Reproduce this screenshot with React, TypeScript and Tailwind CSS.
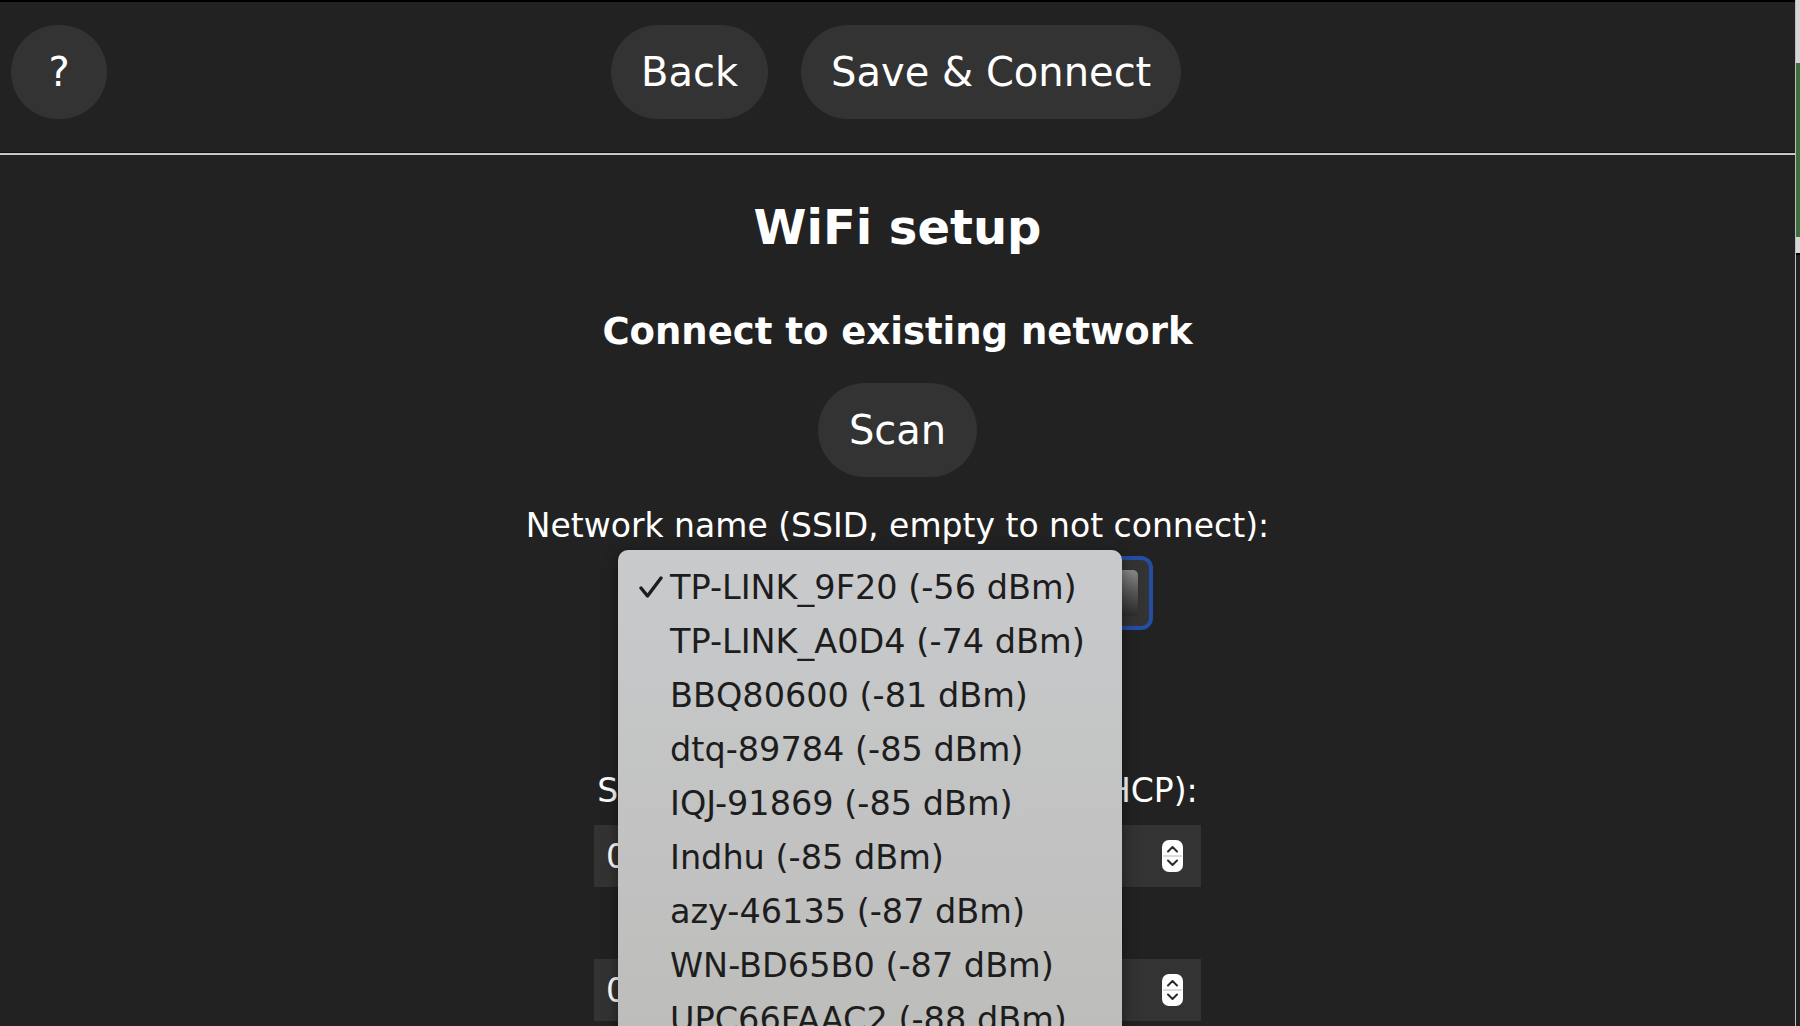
import React from "react";

const networks = [
  "TP-LINK_9F20 (-56 dBm)",
  "TP-LINK_A0D4 (-74 dBm)",
  "BBQ80600 (-81 dBm)",
  "dtq-89784 (-85 dBm)",
  "IQJ-91869 (-85 dBm)",
  "Indhu (-85 dBm)",
  "azy-46135 (-87 dBm)",
  "WN-BD65B0 (-87 dBm)",
  "UPC66FAAC2 (-88 dBm)",
];

const Spinner = () => (
  <svg width="21" height="32" viewBox="0 0 21 32">
    <rect x="0" y="0" width="21" height="32" rx="7" fill="#fff" />
    <line x1="1" y1="16" x2="20" y2="16" stroke="#cfcfcf" strokeWidth="1.5" />
    <path d="M6 11.5 L10.5 7 L15 11.5" fill="none" stroke="#2a2a2a" strokeWidth="2" strokeLinecap="round" strokeLinejoin="round" />
    <path d="M6 20.5 L10.5 25 L15 20.5" fill="none" stroke="#2a2a2a" strokeWidth="2" strokeLinecap="round" strokeLinejoin="round" />
  </svg>
);

const NumInput = () => (
  <div className="flex-1 h-[62px] bg-[#333] flex items-center justify-between pl-3 pr-[18px] text-[33px] leading-[37px]">
    <span>0</span>
    <Spinner />
  </div>
);

const IpRow = () => (
  <div className="w-[607px] flex items-center">
    <NumInput />
    <span className="w-[16px] text-center text-[33px]">.</span>
    <NumInput />
    <span className="w-[16px] text-center text-[33px]">.</span>
    <NumInput />
    <span className="w-[16px] text-center text-[33px]">.</span>
    <NumInput />
  </div>
);

const App = () => {
  return (
    <div className="relative w-[1800px] h-[1026px] overflow-hidden bg-[#222] flex font-['DejaVu_Sans',sans-serif] text-white">
      <main className="w-[1795px] flex flex-col">
        {/* top bar */}
        <div className="h-[152px] border-t-2 border-black flex items-start pt-[23px]">
          <button className="ml-[11px] w-[96px] h-[94px] rounded-full bg-[#333] text-[40px] leading-[46px]">?</button>
          <button className="ml-[504px] px-[30px] py-6 rounded-full bg-[#333] text-[40px] leading-[46px]">Back</button>
          <button className="ml-[33px] px-[30px] py-6 rounded-full bg-[#333] text-[40px] leading-[46px]">Save &amp; Connect</button>
        </div>
        <div className="h-px bg-[#111]" />
        <div className="h-[2px] bg-[#c8c8c8]" />

        <div className="flex flex-col items-center">
          <h2 className="mt-[44px] text-[48px] leading-[56px] font-bold">WiFi setup</h2>
          <h3 className="mt-[55px] text-[37px] leading-[44px] font-bold">Connect to existing network</h3>
          <button className="mt-[29px] px-[31px] py-6 rounded-full bg-[#333] text-[40px] leading-[46px]">Scan</button>
          <div className="mt-[30px] text-[33px] leading-[37px]">Network name (SSID, empty to not connect):</div>
          <div className="mt-[12px] w-[511px] h-[74px] rounded-[12px] border-4 border-[#234ea3] bg-[#333] flex items-center justify-end pr-[11px]">
            <div className="w-[20px] h-[46px] rounded-[5px] bg-gradient-to-b from-[#8a8a8a] via-[#555] to-[#2c2c2c]" />
          </div>
          <div className="mt-[17px] text-[33px] leading-[37px]">Network password:</div>
          <div className="mt-[16px] w-[430px] h-[62px] bg-[#333]" />
          <div className="mt-[10px] text-[33px] leading-[37px]">Static IP (leave at 0.0.0.0 for DHCP):</div>
          <div className="mt-[16px]">
            <IpRow />
          </div>
          <div className="mt-[17px] text-[33px] leading-[37px]">Static gateway:</div>
          <div className="mt-[18px]">
            <IpRow />
          </div>
        </div>
      </main>

      {/* window edge */}
      <div className="flex-1 flex flex-col border-l border-[#bdbdbd]">
        <div className="h-[63px] bg-[#d6d6d6]" />
        <div className="h-[174px] bg-[#3e6e40]" />
        <div className="h-[16px] bg-[#d6d6d6]" />
        <div className="h-[2px] bg-black" />
        <div className="flex-1 bg-[#222]" />
      </div>

      {/* open native select menu */}
      <div className="absolute left-[618px] top-[550px] w-[504px] h-[520px] rounded-t-[10px] bg-gradient-to-b from-[#c9cacc] to-[#bcbcba] shadow-[0_4px_16px_rgba(0,0,0,0.45)] pt-[11px] text-[#1d1d1d] text-[33.5px] leading-[54px]">
        {networks.map((n, i) => (
          <div key={n} className="relative pl-[52px] h-[54px] whitespace-nowrap">
            {i === 0 && (
              <svg className="absolute left-[21px] top-[15px]" width="24" height="23" viewBox="0 0 24 23">
                <path d="M2 12 L8.5 20 L22 2" fill="none" stroke="#1d1d1d" strokeWidth="3.4" strokeLinecap="round" strokeLinejoin="round" />
              </svg>
            )}
            {n}
          </div>
        ))}
      </div>
    </div>
  );
};

export default App;
